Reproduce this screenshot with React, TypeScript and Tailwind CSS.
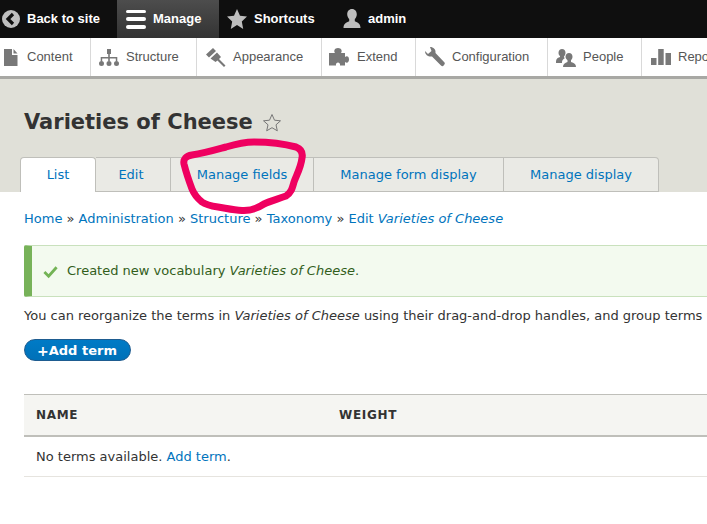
import React from 'react';

const sans = '[font-family:"Liberation_Sans",Arial,sans-serif]';

function Icon({ d, className = 'w-5 h-5', fill = '#787878' }: { d: string; className?: string; fill?: string }) {
  return (
    <svg viewBox="0 0 20 20" className={className} fill={fill}>
      <path d={d} />
    </svg>
  );
}

const menu = [
  { label: 'Content', w: 'w-[91px]', gap: 'gap-[3px]', pad: 'pl-[4px]', d: 'M0 2h8v6h5.500v11H0z M9.500 2l4 4.500h-4z' },
  {
    label: 'Structure',
    w: 'w-[106px]',
    gap: 'gap-[7px]',
    pad: 'pl-[8px]',
    d: 'M8 2h4v5h-1.200v3h7.500v4h-1.500v-2.500h-6V14h-1.600v-2.500h-6V14H1.700v-4h7.500V7H8z M0 16.500a2.500 2.500 0 1 0 5 0a2.500 2.500 0 1 0-5 0z M7.500 16.500a2.500 2.500 0 1 0 5 0a2.500 2.500 0 1 0-5 0z M15 16.500a2.500 2.500 0 1 0 5 0a2.500 2.500 0 1 0-5 0z',
  },
  {
    label: 'Appearance',
    w: 'w-[125px]',
    gap: 'gap-[7px]',
    pad: 'pl-[9px]',
    d: 'M0 7.500L7 1l3 3-7 6.500z M4.500 11.500L11 5.500l4 4.500-2 2 6.500 6.500-1.500 1.500-6.500-6.500-2 1.500z',
  },
  {
    label: 'Extend',
    w: 'w-[94px]',
    gap: 'gap-[8px]',
    pad: 'pl-[7px]',
    d: 'M0 6h6c-1.500-2-.5-5 3-5s4.500 3 3 5h4v4c2-1.500 4-.5 4 2.500s-2 4-4 2.500v3.500h-5c.5-2-1-3-2-3s-2.500 1-2 3H0z',
  },
  {
    label: 'Configuration',
    w: 'w-[132px]',
    gap: 'gap-[7px]',
    pad: 'pl-[9px]',
    d: 'M5 0C8.500 0 11 2.500 10.500 6L19.500 15.500C20 16 20 17 19 18C18 19.500 17 19.500 16 18.500L7 9.500C3.500 10 0 8 0 4L3 7L6.500 4Z',
  },
  {
    label: 'People',
    w: 'w-[94px]',
    gap: 'gap-[7px]',
    pad: 'pl-[8px]',
    d: 'M6 2c2.200 0 3.500 1.700 3.500 3.800 0 1.500-.7 3-1.500 3.700v1l1 .5c-1.500 1-3 2-3 4v1H0c0-4 1-5 4-6v-1C3 8.500 2.500 7.300 2.500 5.800 2.500 3.700 4 2 6 2z M13 6c2.200 0 3.500 1.700 3.500 3.800 0 1.500-.7 2.800-1.500 3.500V15c3 1 5 2 5 5H7c0-3 2-4 4.500-5v-1.700C10.500 12.500 9.500 11.300 9.500 9.800 9.500 7.700 11 6 13 6z',
  },
  { label: 'Reports', w: 'w-[90px]', gap: 'gap-[7px]', pad: 'pl-[9px]', d: 'M0 11h5.500v7H0z M7.200 2h5.500v16H7.200z M14.500 6H20v12h-5.500z' },
];

const tabs = [
  { label: 'List', w: 'w-[76px]', active: true },
  { label: 'Edit', w: 'w-[75px] pr-[4px]' },
  { label: 'Manage fields', w: 'w-[143px]' },
  { label: 'Manage form display', w: 'w-[190px]' },
  { label: 'Manage display', w: 'w-[155px] rounded-tr-[4px]' },
];

export default function App() {
  return (
    <div className='relative h-[524px] w-[707px] overflow-hidden bg-white font-["DejaVu_Sans",sans-serif] text-[13px] text-[#333]'>
      {/* admin toolbar */}
      <div className={`flex h-[38px] bg-[#0f0f0f] text-[13px] font-bold text-white ${sans}`}>
        <div className="flex w-[117px] items-center gap-[7px] pl-[2px]">
          <svg viewBox="0 0 18 18" className="h-[18px] w-[18px]">
            <circle cx="9" cy="9" r="9" fill="#bebebe" />
            <path d="M11 4 6 9l5 5" fill="none" stroke="#0f0f0f" strokeWidth="3.200" />
          </svg>
          <span>Back to site</span>
        </div>
        <div className="flex w-[102px] items-center gap-[7px] bg-gradient-to-b from-[#4d4d4d] to-[#333] pl-[9px]">
          <div className="flex h-[19px] w-[20px] flex-col justify-between">
            <div className="h-[3.500px] rounded-full bg-white" />
            <div className="h-[3.500px] rounded-full bg-white" />
            <div className="h-[3.500px] rounded-full bg-white" />
          </div>
          <span>Manage</span>
        </div>
        <div className="flex w-[115px] items-center gap-[7px] pl-[8px]">
          <Icon className="h-[20px] w-[20px]" fill="#bebebe" d="M10 0l3 6.800 7 .8-5.200 4.800L16.200 20 10 16l-6.200 4 1.400-7.600L0 7.600l7-.8z" />
          <span>Shortcuts</span>
        </div>
        <div className="flex items-center gap-[6px] pl-[8px]">
          <Icon className="h-[20px] w-[20px]" fill="#bebebe" d="M10 0c3 0 4.800 2.300 4.800 5.200 0 2-1 3.900-2 4.800v2.300c3 1 5.700 2.500 5.700 6.700H1.500c0-4.200 2.700-5.700 5.700-6.700V10c-1-.9-2-2.800-2-4.800C5.200 2.300 7 0 10 0z" />
          <span>admin</span>
        </div>
      </div>

      {/* tray menu */}
      <div className={`flex h-[41px] overflow-hidden border-b-[3px] border-[#a8a8a4] bg-white text-[13px] text-[#565656] ${sans}`}>
        {menu.map((m) => (
          <div key={m.label} className={`flex shrink-0 items-center border-r border-[#d9d9d9] ${m.w} ${m.gap} ${m.pad}`}>
            <Icon d={m.d} />
            <span>{m.label}</span>
          </div>
        ))}
      </div>

      {/* page header */}
      <div className="h-[113px] bg-[#e0e0d8] pl-[24px]">
        <div className="flex h-[78px] items-center gap-[9px] pt-[9px]">
          <h1 className="text-[21px] font-bold leading-none text-[#333]">Varieties of Cheese</h1>
          <svg viewBox="0 0 20 20" className="h-[20px] w-[20px]" fill="none" stroke="#777" strokeWidth="1">
            <path d="M10 1.500l2.500 5.700 6 .6-4.500 4 1.300 6L10 14.700 4.700 17.800l1.300-6-4.500-4 6-.6z" />
          </svg>
        </div>
        <div className="-ml-[4px] flex h-[35px]">
          {tabs.map((t) => (
            <div
              key={t.label}
              className={`flex shrink-0 items-center justify-center border-t border-r border-[#bfbfba] text-[#0074bd] ${t.w} ${
                t.active ? 'rounded-t-[4px] border-l bg-white' : 'border-b bg-[#eaeae5]'
              }`}
            >
              {t.label}
            </div>
          ))}
        </div>
      </div>

      {/* content */}
      <div className="pl-[24px]">
        <div className="mt-[19px] whitespace-nowrap leading-[16px]">
          <a className="text-[#0074bd]">Home</a> » <a className="text-[#0074bd]">Administration</a> »{' '}
          <a className="text-[#0074bd]">Structure</a> » <a className="text-[#0074bd]">Taxonomy</a> »{' '}
          <a className="text-[#0074bd]">
            Edit <em>Varieties of Cheese</em>
          </a>
        </div>

        <div className="mt-[18px] flex h-[52px] w-[700px] items-center rounded-l-[2px] border border-l-[8px] border-[#c9e1bd] border-l-[#77b259] bg-[#f3faef] pl-[11px] text-[#325e1c]">
          <svg viewBox="0 0 16 16" className="mr-[9px] h-[15px] w-[15px]" fill="none" stroke="#73b355" strokeWidth="3">
            <path d="M1.500 8.500 6 13l8.500-9.500" />
          </svg>
          <span>
            Created new vocabulary <em>Varieties of Cheese</em>.
          </span>
        </div>

        <p className="mt-[11px] whitespace-nowrap leading-[16px]">
          You can reorganize the terms in <em>Varieties of Cheese</em> using their drag-and-drop handles, and group terms under a parent term.
        </p>

        <div className="mt-[15px] flex h-[22px] w-[107px] items-center rounded-[11px] border border-[#1e5c90] bg-gradient-to-b from-[#007bc6] to-[#0071b8] pl-[12px] pt-[1px] font-bold text-white">
          <span className="text-[14px] leading-none">+</span>Add term
        </div>

        <table className="mt-[33px] w-[700px] border-collapse text-left">
          <thead>
            <tr className="h-[41px] border-t border-b-2 border-t-[#bfbfba] border-b-[#bfbfba] bg-[#f5f5f2]">
              <th className="w-[303px] pl-[12px] text-[12px] tracking-[0.7px] text-[#333]">NAME</th>
              <th className="pl-[12px] text-[12px] tracking-[0.7px] text-[#333]">WEIGHT</th>
            </tr>
          </thead>
          <tbody>
            <tr className="h-[41px] border-b border-[#e6e4df]">
              <td colSpan={2} className="pl-[12px]">
                No terms available. <a className="text-[#0074bd]">Add term</a>.
              </td>
            </tr>
          </tbody>
        </table>
      </div>

      {/* marker scribble drawn over the tabs */}
      <svg className="pointer-events-none absolute left-0 top-0 h-[524px] w-[707px]" viewBox="0 0 707 524" fill="none">
        <path
          d="M184 164 C183 159 186 156 192 155 C205 153 215 150 226 147 C236 144 244 142 254 142 C268 142 285 144 296 147 C301 149 303 153 302 158 C301 167 297 174 294 182 C292 189 291 193 286 196 C278 199 270 201 264 204 C258 208 250 211 242 210.500 C233 210 225 208 218 207 C211 206 206 205 202 202 C197 198 194 194 192 189 C189 181 186 172 184 164 Z"
          stroke="#ef0060"
          strokeWidth="7"
          strokeLinejoin="round"
        />
      </svg>
    </div>
  );
}
